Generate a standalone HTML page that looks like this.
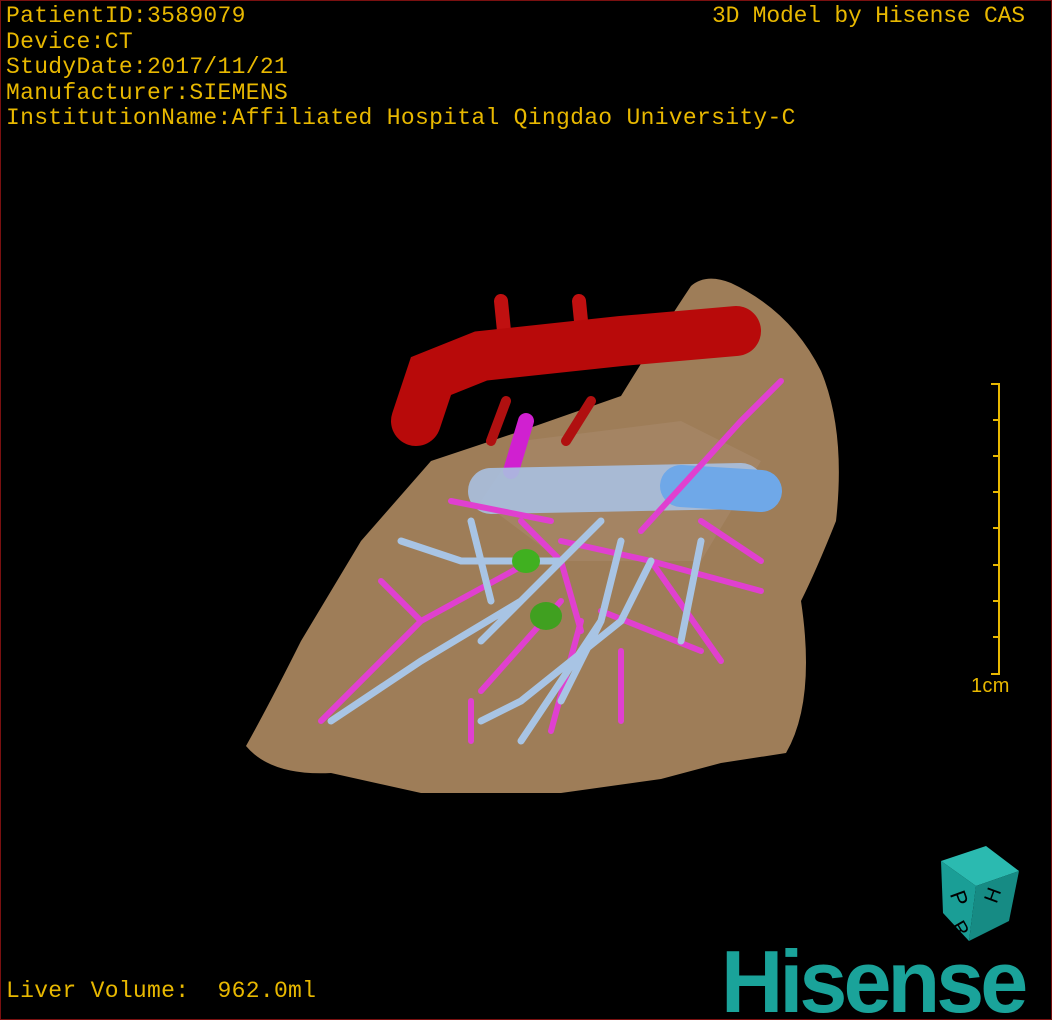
<!DOCTYPE html>
<html><head><style>
html,body{margin:0;padding:0;background:#000;}
#c{position:relative;width:1050px;height:1018px;border:1px solid #7a1010;background:#000;overflow:hidden;}
.t{position:absolute;color:#e8b800;font-family:"Liberation Mono",monospace;font-size:23px;line-height:25.6px;white-space:pre;letter-spacing:0.3px;}
.logo{position:absolute;left:720px;top:938px;font-family:"Liberation Sans",sans-serif;font-weight:bold;color:#1aa39a;font-size:88px;letter-spacing:-4px;line-height:86px;transform:scaleX(0.98);transform-origin:left top;}
</style></head><body><div id="c">
<div class="t" style="left:5px;top:3px">PatientID:3589079
Device:CT
StudyDate:2017/11/21
Manufacturer:SIEMENS
InstitutionName:Affiliated Hospital Qingdao University-C</div>
<div class="t" style="left:711px;top:3px;letter-spacing:-0.2px">3D Model by Hisense CAS</div>
<div class="t" style="left:5px;top:978px">Liver Volume:  962.0ml</div>
<div class="t" style="left:970px;top:673px;font-family:'Liberation Sans',sans-serif;font-size:20px">1cm</div>
<svg width="1050" height="1018" style="position:absolute;left:0;top:0">
<path d="M245,745 Q270,700 300,640 L360,540 L430,460 L520,430 L620,395 Q660,330 690,285 Q705,272 730,282 Q790,310 820,370 Q845,430 835,520 Q815,570 800,600 Q815,700 785,752 L720,762 L660,778 L560,792 L420,792 L330,772 Q270,775 245,745 Z" fill="#9e7d58"/>
<path d="M520,440 L680,420 L760,460 L700,560 L560,560 L480,500Z" fill="#a8896a" opacity=".6"/>
<g stroke-linecap="round" fill="none">
<path d="M500,300 L505,350 M578,300 L582,340" stroke="#c01010" stroke-width="14"/>
<path d="M415,420 L430,375 L480,355 L620,340 L735,330" stroke="#b80a0a" stroke-width="50"/>
<path d="M505,400 L490,440 M590,400 L565,440" stroke="#b01010" stroke-width="10"/>
<path d="M525,420 L510,470" stroke="#d020d0" stroke-width="16"/>
<path d="M490,490 L740,485" stroke="#a8c0e0" stroke-width="46" opacity=".9"/>
<path d="M680,485 L760,490" stroke="#6fa8e8" stroke-width="42"/>
<g stroke="#e040d0" stroke-width="6">
<path d="M520,520 L560,560 L580,630 M560,540 L650,560 L720,660 M530,560 L420,620 L320,720 M560,600 L480,690 M600,610 L700,650 M640,530 L740,420 L780,380 M650,560 L760,590 M550,520 L450,500 M580,620 L550,730 M700,520 L760,560 M420,620 L380,580 M470,700 L470,740 M620,650 L620,720"/>
</g>
<g stroke="#a8c4e4" stroke-width="7">
<path d="M600,520 L520,600 L420,660 L330,720 M560,560 L460,560 L400,540 M620,540 L600,620 L560,700 M650,560 L620,620 L520,700 L480,720 M700,540 L680,640 M520,600 L480,640 M600,620 L520,740 M470,520 L490,600"/>
</g>
<ellipse cx="525" cy="560" rx="14" ry="12" fill="#40b020"/>
<ellipse cx="545" cy="615" rx="16" ry="14" fill="#40a020"/>
</g>
<g stroke="#e8b800" stroke-width="2" fill="none">
<path d="M990,383 L998,383 L998,673 L990,673"/>
<path d="M992,419 H998 M992,455 H998 M992,491 H998 M992,527 H998 M992,564 H998 M992,600 H998 M992,636 H998"/>
</g>
<g>
<path d="M940,860 L985,845 L1018,870 L975,885Z" fill="#2bbab0"/>
<path d="M940,860 L975,885 L968,940 L942,912Z" fill="#1a9e96"/>
<path d="M975,885 L1018,870 L1008,920 L968,940Z" fill="#168b84"/>
<text x="950" y="905" font-family="Liberation Sans" font-size="22" fill="#000" transform="rotate(70 958 898)">P</text>
<text x="987" y="905" font-family="Liberation Sans" font-size="20" fill="#000" transform="rotate(-70 990 898)">H</text>
<text x="952" y="935" font-family="Liberation Sans" font-size="20" fill="#000" transform="rotate(60 960 928)">R</text>
</g>
</svg>
<div class="logo">Hisense</div>
</div></body></html>
